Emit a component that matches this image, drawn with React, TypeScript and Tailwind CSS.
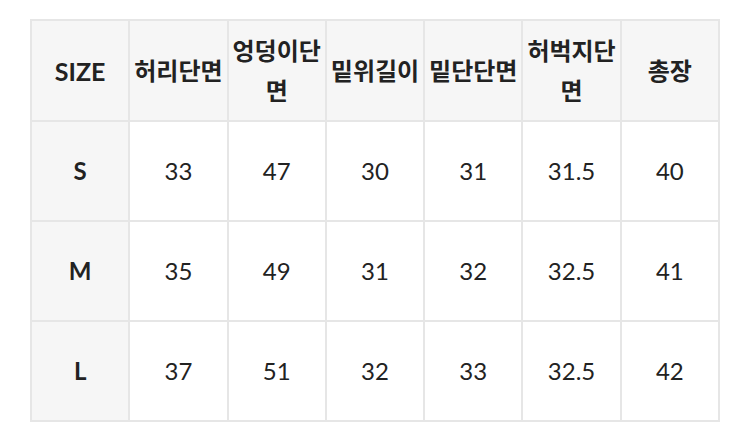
import React from "react";

const headers = ["SIZE", "허리단면", "엉덩이단면", "밑위길이", "밑단단면", "허벅지단면", "총장"];
const rows = [
  ["S", "33", "47", "30", "31", "31.5", "40"],
  ["M", "35", "49", "31", "32", "32.5", "41"],
  ["L", "37", "51", "32", "33", "32.5", "42"],
];

export default function App() {
  return (
    <div
      className="w-[750px] h-[434px] bg-white pl-[30px] pt-[19px]"
      style={{ fontFamily: "Lato, 'Noto Sans CJK KR', sans-serif" }}
    >
      <table className="w-[690px] table-fixed border-collapse text-[#222]">
        <thead>
          <tr className="h-[101px] bg-[#f6f6f6]">
            {headers.map((h, i) => (
              <th
                key={i}
                className={`border-2 border-[#e6e6e6] px-0.5 text-center align-middle font-bold ${
                  i === 0 ? "text-[25px]" : "text-[24px]"
                } leading-[40px]`}
              >
                {h}
              </th>
            ))}
          </tr>
        </thead>
        <tbody>
          {rows.map((r, ri) => (
            <tr key={ri} className="h-[100px]">
              {r.map((c, ci) => (
                <td
                  key={ci}
                  className={`border-2 border-[#e6e6e6] text-center align-middle text-[24px] ${
                    ci === 0 ? "bg-[#f6f6f6] font-bold" : "bg-white font-normal"
                  }`}
                >
                  {c}
                </td>
              ))}
            </tr>
          ))}
        </tbody>
      </table>
    </div>
  );
}
